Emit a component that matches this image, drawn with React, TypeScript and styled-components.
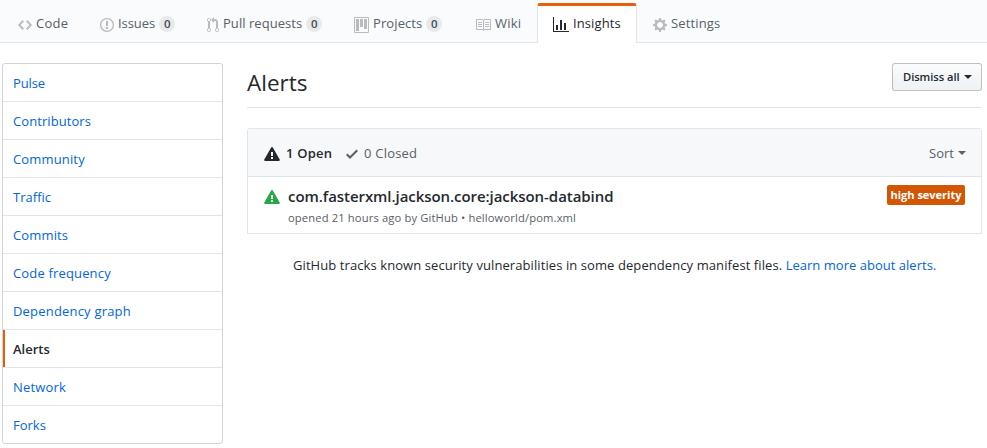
import React from 'react';
import styled, { createGlobalStyle, css } from 'styled-components';

const GlobalStyle = createGlobalStyle`
  * { box-sizing: border-box; }
  body {
    margin: 0;
    background: #fff;
    color: #24292e;
    font: 13px/20px "Open Sans", "Noto Sans", sans-serif;
    overflow: hidden;
  }
  a { color: #0366d6; text-decoration: none; }
`;

const icons = {
  code: [14, 'M9.5 3L8 4.5 11.5 8 8 11.5 9.5 13 14 8 9.5 3zm-5 0L0 8l4.5 5L6 11.5 2.5 8 6 4.5 4.5 3z'],
  issue: [14, 'M7 2.3c3.14 0 5.7 2.56 5.7 5.7s-2.56 5.7-5.7 5.7A5.71 5.71 0 0 1 1.3 8c0-3.14 2.56-5.7 5.7-5.7zM7 1C3.14 1 0 4.14 0 8s3.14 7 7 7 7-3.14 7-7-3.14-7-7-7zm1 3H6v5h2V4zm0 6H6v2h2v-2z'],
  pull: [12, 'M11 11.28V5c-.03-.78-.34-1.47-.94-2.06C9.46 2.35 8.78 2.03 8 2H7V0L4 3l3 3V4h1c.27.02.48.11.69.31.21.2.3.42.31.69v6.28A1.993 1.993 0 0 0 10 15a1.993 1.993 0 0 0 1-3.72zm-1 2.92c-.66 0-1.2-.55-1.2-1.2 0-.65.55-1.2 1.2-1.2.65 0 1.2.55 1.2 1.2 0 .65-.55 1.2-1.2 1.2zM4 3c0-1.11-.89-2-2-2a1.993 1.993 0 0 0-1 3.72v6.56A1.993 1.993 0 0 0 2 15a1.993 1.993 0 0 0 1-3.72V4.72c.59-.34 1-.98 1-1.72zm-.8 10c0 .66-.55 1.2-1.2 1.2-.65 0-1.2-.55-1.2-1.2 0-.65.55-1.2 1.2-1.2.65 0 1.2.55 1.2 1.2zM2 4.2C1.34 4.2.8 3.65.8 3c0-.65.55-1.2 1.2-1.2.65 0 1.2.55 1.2 1.2 0 .65-.55 1.2-1.2 1.2z'],
  project: [15, 'M10 12h3V2h-3v10zm-4-2h3V2H6v8zm-4 4h3V2H2v12zm-1 1h13V1H1v14zM14 0H1a1 1 0 0 0-1 1v14a1 1 0 0 0 1 1h13a1 1 0 0 0 1-1V1a1 1 0 0 0-1-1z'],
  book: [16, 'M3 5h4v1H3V5zm0 3h4V7H3v1zm0 2h4V9H3v1zm11-5h-4v1h4V5zm0 2h-4v1h4V7zm0 2h-4v1h4V9zm2-6v9c0 .55-.45 1-1 1H9.5l-1 1-1-1H2c-.55 0-1-.45-1-1V3c0-.55.45-1 1-1h5.5l1 1 1-1H15c.55 0 1 .45 1 1zm-8 .5L7.5 3H2v9h6V3.5zm7-.5H9.5l-.5.5V12h6V3z'],
  graph: [16, 'M16 14v1H0V0h1v14h15zM5 13H3V8h2v5zm4 0H7V3h2v10zm4 0h-2V6h2v7z'],
  gear: [14, 'M14 8.77v-1.6l-1.94-.64-.45-1.09.88-1.84-1.13-1.13-1.81.91-1.09-.45-.69-1.92h-1.6l-.63 1.94-1.11.45-1.84-.88-1.13 1.13.91 1.81-.45 1.09L0 7.23v1.59l1.94.64.45 1.09-.88 1.84 1.13 1.13 1.81-.91 1.09.45.69 1.92h1.59l.63-1.94 1.11-.45 1.84.88 1.13-1.13-.92-1.81.47-1.09L14 8.75v.02zM7 11c-1.66 0-3-1.34-3-3s1.34-3 3-3 3 1.34 3 3-1.34 3-3 3z'],
  alert: [16, 'M8.865 1.52c-.18-.31-.51-.5-.87-.5s-.69.19-.87.5L.275 13.5c-.18.31-.18.69 0 1 .19.31.52.5.87.5h13.7c.36 0 .69-.19.86-.5.17-.31.18-.69.01-1L8.865 1.52zM8.995 13h-2v-2h2v2zm0-3h-2V6h2v4z'],
  check: [12, 'M12 5l-8 8-4-4 1.5-1.5L4 10l6.5-6.5L12 5z'],
} as const;

type IconName = keyof typeof icons;

const Svg = styled.svg`
  display: block;
  flex: none;
  fill: currentColor;
`;

function Icon({ name }: { name: IconName }) {
  const [width, path] = icons[name];
  return (
    <Svg width={width} height={16} viewBox={`0 0 ${width} 16`} aria-hidden>
      <path fillRule="evenodd" d={path} />
    </Svg>
  );
}

const Label = styled.span<{ $track?: number }>`
  white-space: nowrap;
  letter-spacing: ${p => p.$track ?? 0}px;
`;

const TabBar = styled.nav`
  display: flex;
  align-items: flex-end;
  height: 43px;
  padding: 3px 0 0 2px;
  background: #fafbfc;
  box-shadow: inset 0 -1px #e1e4e8;
`;

const Tab = styled.a<{ $width: number; $active?: boolean }>`
  display: flex;
  align-items: center;
  flex: none;
  gap: 4px;
  width: ${p => p.$width}px;
  height: 40px;
  padding: 0 0 4px 15px;
  border: 1px solid transparent;
  border-top: 3px solid transparent;
  border-bottom: 0;
  border-radius: 3px 3px 0 0;
  color: #586069;
  ${Svg} { color: #babbbd; margin-top: 5px; }
  ${p => p.$active && css`
    background: #fff;
    border-color: #e36209 #e1e4e8 transparent;
    color: #24292e;
    ${Svg} { color: #24292e; }
  `}
`;

const Counter = styled.span`
  display: grid;
  place-items: center;
  width: 16px;
  height: 16px;
  margin-top: 3px;
  border-radius: 8px;
  background: rgba(27, 31, 35, 0.08);
  color: #444d56;
  font-size: 11.5px;
  line-height: 16px;
  font-weight: 600;
`;

const Layout = styled.div`
  display: grid;
  grid-template-columns: 221px 735px;
  column-gap: 24px;
  align-items: start;
  padding: 20px 0 0 2px;
`;

const Menu = styled.nav`
  border: 1px solid #d1d5da;
  border-radius: 3px;
  overflow: hidden;
`;

const MenuItem = styled.a<{ $active?: boolean }>`
  display: flex;
  align-items: center;
  height: 38px;
  padding: 1px 0 0 10px;
  border-bottom: 1px solid #e1e4e8;
  &:last-child { border-bottom: 0; height: 37px; }
  ${p => p.$active && css`
    color: #24292e;
    font-weight: 600;
    box-shadow: inset 2px 0 #e36209;
  `}
`;

const Header = styled.header`
  display: flex;
  justify-content: space-between;
  align-items: flex-start;
  height: 45px;
  border-bottom: 1px solid #e1e4e8;
`;

const Title = styled.h1`
  margin: 3px 0 0;
  font-size: 22.5px;
  line-height: 34px;
  font-weight: 400;
`;

const Caret = styled.span`
  width: 0;
  border: 4px solid transparent;
  border-top-color: currentColor;
  border-bottom: 0;
`;

const Button = styled.button`
  display: flex;
  align-items: center;
  gap: 4px;
  width: 90px;
  height: 28px;
  padding: 0 0 0 10px;
  border: 1px solid rgba(27, 31, 35, 0.25);
  border-radius: 3px;
  background: linear-gradient(-180deg, #fafbfc, #eff3f6 90%);
  color: #24292e;
  font: 600 11.2px/20px "Open Sans", "Noto Sans", sans-serif;
`;

const Box = styled.section`
  margin-top: 20px;
  border: 1px solid #e1e4e8;
  border-radius: 3px 3px 0 0;
  overflow: hidden;
`;

const BoxHeader = styled.div`
  display: flex;
  align-items: center;
  height: 48px;
  padding: 1px 15px 0 16px;
  background: #f6f8fa;
  border-bottom: 1px solid #e1e4e8;
`;

const Status = styled.a<{ $selected?: boolean }>`
  display: flex;
  align-items: center;
  gap: 6px;
  margin-right: 14px;
  color: ${p => (p.$selected ? '#24292e' : '#586069')};
  font-weight: ${p => (p.$selected ? 600 : 400)};
  ${Svg} { margin-top: 2px; }
`;

const Sort = styled.a`
  display: flex;
  align-items: center;
  gap: 4px;
  margin-left: auto;
  color: #586069;
`;

const AlertRow = styled.article`
  display: flex;
  align-items: flex-start;
  height: 56px;
  padding: 7px 16px 0;
  > ${Svg} { margin-top: 5px; color: #28a745; }
`;

const AlertBody = styled.div`
  flex: 1;
  padding-left: 8px;
`;

const AlertTitle = styled.h2`
  margin: 0;
  font-size: 15px;
  line-height: 24px;
  font-weight: 600;
`;

const Meta = styled.p`
  margin: 1px 0 0;
  color: #586069;
  font-size: 11.2px;
  line-height: 18px;
`;

const Severity = styled.span`
  display: grid;
  place-items: center;
  width: 78px;
  height: 20px;
  margin-top: 1px;
  border-radius: 2px;
  background: #d15704;
  color: #fff;
  font-size: 11.1px;
  font-weight: 700;
`;

const Note = styled.p`
  margin: 21px 0 0 46px;
  white-space: nowrap;
`;

const tabs: { icon: IconName; label: string; width: number; track?: number; count?: number; active?: boolean }[] = [
  { icon: 'code', label: 'Code', width: 82, track: 0.3 },
  { icon: 'issue', label: 'Issues', width: 107, track: -0.05, count: 0 },
  { icon: 'pull', label: 'Pull requests', width: 147, track: 0.05, count: 0 },
  { icon: 'project', label: 'Projects', width: 121, track: 0.1, count: 0 },
  { icon: 'book', label: 'Wiki', width: 78, track: 0.25 },
  { icon: 'graph', label: 'Insights', width: 100, track: 0.1, active: true },
  { icon: 'gear', label: 'Settings', width: 99, track: 0.15 },
];

const menu: { label: string; track?: number }[] = [
  { label: 'Pulse', track: -0.1 },
  { label: 'Contributors', track: 0.07 },
  { label: 'Community', track: 0.15 },
  { label: 'Traffic' },
  { label: 'Commits', track: 0.14 },
  { label: 'Code frequency', track: 0.16 },
  { label: 'Dependency graph', track: 0.19 },
  { label: 'Alerts' },
  { label: 'Network', track: 0.17 },
  { label: 'Forks' },
];

export default function App() {
  return (
    <>
      <GlobalStyle />
      <TabBar>
        {tabs.map(t => (
          <Tab key={t.label} $width={t.width} $active={t.active}>
            <Icon name={t.icon} />
            <Label $track={t.track}>{t.label}</Label>
            {t.count !== undefined && <Counter>{t.count}</Counter>}
          </Tab>
        ))}
      </TabBar>
      <Layout>
        <Menu>
          {menu.map(m => (
            <MenuItem key={m.label} $active={m.label === 'Alerts'}>
              <Label $track={m.track}>{m.label}</Label>
            </MenuItem>
          ))}
        </Menu>
        <main>
          <Header>
            <Title><Label>Alerts</Label></Title>
            <Button><Label $track={-0.05}>Dismiss all</Label><Caret /></Button>
          </Header>
          <Box>
            <BoxHeader>
              <Status $selected><Icon name="alert" /><Label $track={0.2}>1 Open</Label></Status>
              <Status><Icon name="check" /><Label $track={0.2}>0 Closed</Label></Status>
              <Sort><Label>Sort</Label><Caret /></Sort>
            </BoxHeader>
            <AlertRow>
              <Icon name="alert" />
              <AlertBody>
                <AlertTitle><Label $track={-0.06}>com.fasterxml.jackson.core:jackson-databind</Label></AlertTitle>
                <Meta><Label $track={0.14}>opened 21 hours ago by GitHub • helloworld/pom.xml</Label></Meta>
              </AlertBody>
              <Severity><Label $track={-0.05}>high severity</Label></Severity>
            </AlertRow>
          </Box>
          <Note>
            <Label $track={0.085}>GitHub tracks known security vulnerabilities in some dependency manifest files. </Label>
            <a><Label $track={0.02}>Learn more about alerts.</Label></a>
          </Note>
        </main>
      </Layout>
    </>
  );
}
